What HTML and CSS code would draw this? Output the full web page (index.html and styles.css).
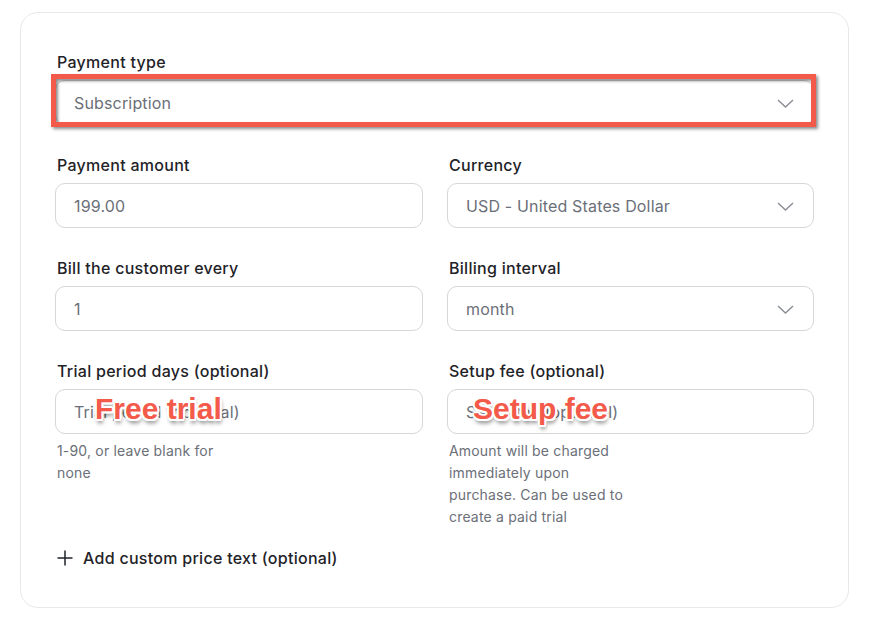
FILE: index.html
```html
<!DOCTYPE html>
<html>
<head>
<meta charset="utf-8">
<link rel="stylesheet" href="styles.css">
</head>
<body>
<div class="card">
  <div class="grid">
    <div class="field full">
      <label class="label">Payment type</label>
      <div class="wrap">
        <div class="control select"><span>Subscription</span>
          <svg class="chev" width="17" height="9" viewBox="0 0 17 9"><path d="M1 1l7.5 7 7.5-7" fill="none" stroke="#8a8d94" stroke-width="1.4"/></svg>
        </div>
        <div class="frame"></div>
      </div>
    </div>

    <div class="field">
      <label class="label">Payment amount</label>
      <input class="control" type="text" value="199.00">
    </div>
    <div class="field">
      <label class="label">Currency</label>
      <div class="control select"><span>USD - United States Dollar</span>
        <svg class="chev" width="17" height="9" viewBox="0 0 17 9"><path d="M1 1l7.5 7 7.5-7" fill="none" stroke="#8a8d94" stroke-width="1.4"/></svg>
      </div>
    </div>

    <div class="field">
      <label class="label">Bill the customer every</label>
      <input class="control" type="text" value="1">
    </div>
    <div class="field">
      <label class="label">Billing interval</label>
      <div class="control select"><span>month</span>
        <svg class="chev" width="17" height="9" viewBox="0 0 17 9"><path d="M1 1l7.5 7 7.5-7" fill="none" stroke="#8a8d94" stroke-width="1.4"/></svg>
      </div>
    </div>

    <div class="field">
      <label class="label">Trial period days (optional)</label>
      <div class="wrap">
        <input class="control" type="text" placeholder="Trial period (optional)">
        <span class="callout callout-trial">Free trial</span>
      </div>
      <p class="help">1-90, or leave blank for none</p>
    </div>
    <div class="field">
      <label class="label">Setup fee (optional)</label>
      <div class="wrap">
        <input class="control" type="text" placeholder="Setup fee (optional)">
        <span class="callout callout-fee">Setup fee</span>
      </div>
      <p class="help">Amount will be charged immediately upon purchase. Can be used to create a paid trial</p>
    </div>
  </div>

  <div class="add">
    <svg width="16" height="16" viewBox="0 0 16 16"><path d="M8 0.5v15M0.5 8h15" stroke="#1f2328" stroke-width="1.5" fill="none"/></svg>
    <span>Add custom price text (optional)</span>
  </div>
</div>
</body>
</html>
```
FILE: styles.css
```css
* { box-sizing: border-box; }
html, body { margin: 0; padding: 0; background: #fff; }
body {
  font-family: "Inter", "Liberation Sans", sans-serif;
  color: #1f2328;
}
.card {
  width: 829px;
  margin: 12px 0 0 20px;
  border: 1px solid #e8e8eb;
  border-radius: 18px;
  padding: 39px 34px 38px 34px;
}
.grid {
  display: grid;
  grid-template-columns: 368px 367px;
  column-gap: 24px;
  row-gap: 30px;
}
.full { grid-column: 1 / 3; }
.label {
  display: block;
  font-size: 16px;
  font-weight: 500;
  line-height: 20px;
  letter-spacing: 0.28px;
  margin: 0 0 8px 2px;
  color: #1f2328;
}
.wrap { position: relative; }
.control {
  display: block;
  width: 100%;
  height: 45px;
  border: 1px solid #d6d6db;
  border-radius: 10px;
  padding: 0 18px;
  font-family: "Inter", "Liberation Sans", sans-serif;
  font-size: 16px;
  letter-spacing: 0.16px;
  color: #6b6f78;
  background: #fff;
  outline: none;
}
.control::placeholder { color: #6b6f78; }
.select {
  display: flex;
  align-items: center;
  justify-content: space-between;
  padding-top: 1px;
}
.chev { flex: none; margin-right: 1px; }
.frame {
  position: absolute;
  left: -4px; right: -2px; top: -6px; bottom: -2px;
  border: 5px solid #f45a4a;
  box-shadow: 2px 2px 3px rgba(0,0,0,0.45), inset 2px 2px 3px rgba(0,0,0,0.45);
}
.help {
  margin: 6px 0 0 2px;
  max-width: 180px;
  font-size: 14px;
  line-height: 22px;
  letter-spacing: 0.18px;
  color: #6b6f78;
}
.callout {
  position: absolute;
  top: 5px;
  font-family: "Liberation Sans", Arial, sans-serif;
  font-weight: 700;
  font-size: 30px;
  line-height: 30px;
  color: #f45a4a;
  white-space: nowrap;
  text-shadow:
    -2px 0 0 #fff, 2px 0 0 #fff, 0 -2px 0 #fff, 0 2px 0 #fff,
    -1.5px -1.5px 0 #fff, 1.5px -1.5px 0 #fff, -1.5px 1.5px 0 #fff, 1.5px 1.5px 0 #fff,
    1px 4px 4px rgba(0,0,0,0.55);
}
.callout-trial { left: 40px; }
.callout-fee { left: 26px; }
.add {
  display: flex;
  align-items: center;
  gap: 10px;
  margin: 19px 0 0 2px;
  height: 22px;
  font-size: 16px;
  font-weight: 500;
  letter-spacing: 0.28px;
  color: #1f2328;
}
```
